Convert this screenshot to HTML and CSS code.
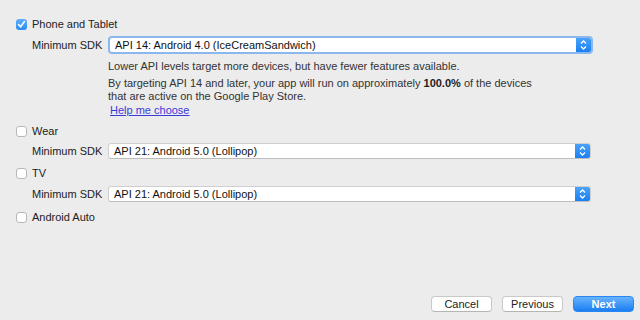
FILE: index.html
```html
<!DOCTYPE html>
<html>
<head>
<meta charset="utf-8">
<link rel="stylesheet" href="styles.css">
</head>
<body>
<div class="page">
  <div class="check-row">
    <span class="cb checked"><svg width="11" height="11" viewBox="0 0 11 11"><path d="M2.6 5.6 L4.6 7.8 L8.4 2.6" fill="none" stroke="#fff" stroke-width="1.6" stroke-linecap="round" stroke-linejoin="round"/></svg></span>
    <span class="cb-label">Phone and Tablet</span>
  </div>
  <div class="sdk-row first">
    <span class="sdk-label">Minimum SDK</span>
    <div class="select focused">
      <span class="select-text">API 14: Android 4.0 (IceCreamSandwich)</span>
      <span class="arrow"><svg width="9" height="12" viewBox="0 0 9 12"><path d="M2 4.5 L4.5 2 L7 4.5 M2 7.5 L4.5 10 L7 7.5" fill="none" stroke="#fff" stroke-width="1.3"/></svg></span>
    </div>
  </div>
  <div class="desc">
    <p>Lower API levels target more devices, but have fewer features available.</p>
    <p>By targeting API 14 and later, your app will run on approximately <b>100.0%</b> of the devices<br>that are active on the Google Play Store.</p>
    <a class="help" href="#">Help me choose</a>
  </div>
  <div class="check-row wear">
    <span class="cb"></span>
    <span class="cb-label">Wear</span>
  </div>
  <div class="sdk-row">
    <span class="sdk-label">Minimum SDK</span>
    <div class="select">
      <span class="select-text">API 21: Android 5.0 (Lollipop)</span>
      <span class="arrow"><svg width="9" height="12" viewBox="0 0 9 12"><path d="M2 4.5 L4.5 2 L7 4.5 M2 7.5 L4.5 10 L7 7.5" fill="none" stroke="#fff" stroke-width="1.3"/></svg></span>
    </div>
  </div>
  <div class="check-row tv">
    <span class="cb"></span>
    <span class="cb-label">TV</span>
  </div>
  <div class="sdk-row lower">
    <span class="sdk-label">Minimum SDK</span>
    <div class="select">
      <span class="select-text">API 21: Android 5.0 (Lollipop)</span>
      <span class="arrow"><svg width="9" height="12" viewBox="0 0 9 12"><path d="M2 4.5 L4.5 2 L7 4.5 M2 7.5 L4.5 10 L7 7.5" fill="none" stroke="#fff" stroke-width="1.3"/></svg></span>
    </div>
  </div>
  <div class="check-row auto">
    <span class="cb"></span>
    <span class="cb-label">Android Auto</span>
  </div>
  <div class="buttons">
    <button class="btn">Cancel</button>
    <button class="btn">Previous</button>
    <button class="btn primary">Next</button>
  </div>
</div>
</body>
</html>
```

FILE: styles.css
```css
html, body {
  margin: 0;
  padding: 0;
  background: #ececec;
}
body {
  font-family: "Liberation Sans", Arial, sans-serif;
  font-size: 11px;
  color: #222;
}
.page {
  height: 320px;
  box-sizing: border-box;
  padding: 14px 6px 8px 16px;
  display: flex;
  flex-direction: column;
}
.check-row {
  height: 20px;
  display: flex;
  align-items: center;
  gap: 5px;
}
.check-row.wear { margin-top: 4px; }
.check-row.tv { margin-top: 4px; }
.check-row.auto { margin-top: 5px; }
.cb {
  width: 11px;
  height: 11px;
  box-sizing: border-box;
  border: 1px solid #b8b8b8;
  border-radius: 3px;
  background: #fff;
  display: flex;
}
.cb.checked {
  border: none;
  background: linear-gradient(#5fb0fb, #2a8bf5);
}
.cb-label {
  font-size: 11px;
  color: #222;
}
.sdk-row {
  display: flex;
  align-items: center;
  margin-top: 2px;
  padding-left: 16px;
}
.sdk-row.lower { margin-top: 3px; }
.sdk-label {
  width: 76px;
  color: #222;
}
.select {
  width: 483px;
  height: 16px;
  box-sizing: border-box;
  background: #fff;
  border: 1px solid #cfcfcf;
  border-bottom-color: #bdbdbd;
  border-radius: 3px;
  display: flex;
  align-items: center;
  justify-content: space-between;
  overflow: hidden;
}
.select.focused {
  width: 485px;
  height: 18px;
  border: 2px solid #8ab8ee;
  border-radius: 4px;
}
.select-text {
  padding-left: 5px;
  color: #111;
}
.arrow {
  width: 15px;
  height: 100%;
  background: linear-gradient(#4aa3fa, #1a7ff0);
  display: flex;
  align-items: center;
  justify-content: center;
}
.desc {
  padding-left: 92px;
  margin-top: 6px;
  line-height: 13px;
  color: #333;
  display: flex;
  flex-direction: column;
  align-items: flex-start;
}
.desc p {
  margin: 0;
}
.desc p:first-child { margin-bottom: 4px; }
.desc b { color: #222; }
.help {
  margin-left: 2px;
  margin-top: 1px;
  color: #3a3ad8;
  text-decoration: underline;
}
.buttons {
  margin-top: auto;
  display: flex;
  justify-content: flex-end;
  gap: 10px;
}
.btn {
  width: 61px;
  height: 16px;
  padding: 0;
  font-family: "Liberation Sans", Arial, sans-serif;
  font-size: 11px;
  color: #222;
  background: #fff;
  border: 1px solid #c9c9c9;
  border-bottom-color: #b5b5b5;
  border-radius: 4px;
}
.btn.primary {
  color: #fff;
  font-weight: bold;
  border: 1px solid #2a86f0;
  background: linear-gradient(#68b3fb, #1b7ff2);
}
```
